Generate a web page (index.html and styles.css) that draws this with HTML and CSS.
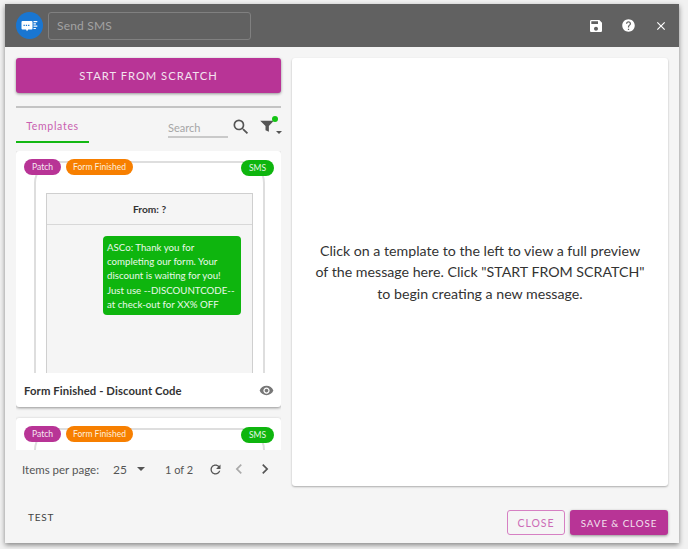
FILE: index.html
```html
<!DOCTYPE html>
<html lang="en">
<head>
<meta charset="utf-8">
<title>Send SMS</title>
<link rel="stylesheet" href="styles.css">
</head>
<body>
<div class="dialog">
  <header class="topbar">
    <span class="logo">
      <svg viewBox="0 0 27 27" width="27" height="27">
        <path class="logo-w" d="M6.500 9h9a1 1 0 0 1 1 1v6.500a1 1 0 0 1-1 1h-3.300l-1.200 1.800-1-1.800H6.500a1 1 0 0 1-1-1V10a1 1 0 0 1 1-1z"/>
        <path class="logo-b" d="M7.500 12.800h1.300v1.100H7.500zM9.800 12.800h1.300v1.100H9.800zM12.100 12.800h1.300v1.100h-1.300z"/>
        <path class="logo-w" d="M17.500 9h3.800v1.200h-3.800zM17.500 11.300h2.400v1.200h-2.400zM17.500 13.600h3.800v1.200h-3.800zM17.500 15.900h2.400v1.200h-2.400z"/>
      </svg>
    </span>
    <div class="title-field">Send SMS</div>
    <div class="top-actions">
      <svg class="icon-save" viewBox="0 0 24 24"><path d="M17 3H5c-1.110 0-2 .9-2 2v14c0 1.100.89 2 2 2h14c1.100 0 2-.9 2-2V7l-4-4zm-5 16c-1.660 0-3-1.340-3-3s1.340-3 3-3 3 1.340 3 3-1.340 3-3 3zm3-10H5V5h10v4z"/></svg>
      <svg class="icon-help" viewBox="0 0 24 24"><path d="M12 2C6.480 2 2 6.480 2 12s4.480 10 10 10 10-4.480 10-10S17.520 2 12 2zm1 17h-2v-2h2v2zm2.070-7.750l-.9.920C13.450 12.900 13 13.500 13 15h-2v-.5c0-1.100.45-2.100 1.170-2.830l1.240-1.260c.37-.36.59-.86.59-1.410 0-1.100-.9-2-2-2s-2 .9-2 2H8c0-2.210 1.790-4 4-4s4 1.790 4 4c0 .88-.36 1.680-.93 2.250z"/></svg>
      <svg class="icon-close" viewBox="0 0 24 24"><path d="M19 6.410 17.590 5 12 10.590 6.410 5 5 6.410 10.590 12 5 17.590 6.410 19 12 13.410 17.590 19 19 17.590 13.410 12z"/></svg>
    </div>
  </header>

  <div class="content">
    <section class="left">
      <button class="btn-primary btn-start" type="button">START FROM SCRATCH</button>
      <div class="divider"></div>
      <div class="tabs-row">
        <div class="tab">Templates</div>
        <div class="search-field">Search</div>
        <svg class="search-icon" viewBox="0 0 24 24"><path d="M15.500 14h-.79l-.28-.27A6.470 6.470 0 0 0 16 9.500 6.500 6.500 0 1 0 9.500 16c1.610 0 3.090-.59 4.230-1.570l.27.28v.79l5 4.990L20.490 19l-4.990-5zm-6 0C7.010 14 5 11.990 5 9.500S7.010 5 9.500 5 14 7.010 14 9.500 11.990 14 9.500 14z"/></svg>
        <span class="filter">
          <svg class="filter-icon" viewBox="0 0 18 16"><path d="M0 1h18l-6.500 7v7.500l-4.500-2V8z"/></svg>
          <span class="filter-dot"></span>
          <span class="filter-caret"></span>
        </span>
      </div>
      <div class="list">
        <article class="card">
          <div class="preview">
            <div class="phone">
              <div class="screen">
                <div class="from">From: ?</div>
                <div class="messages">
                  <div class="bubble">ASCo: Thank you for<br>completing our form. Your<br>discount is waiting for you!<br>Just use --DISCOUNTCODE--<br>at check-out for XX% OFF</div>
                </div>
              </div>
            </div>
            <span class="chip chip-patch">Patch</span>
            <span class="chip chip-orange">Form Finished</span>
            <span class="chip chip-sms">SMS</span>
          </div>
          <div class="card-foot">
            <span class="card-title">Form Finished - Discount Code</span>
            <svg class="eye" viewBox="0 0 24 24"><path d="M12 4.500C7 4.500 2.730 7.610 1 12c1.730 4.390 6 7.500 11 7.500s9.270-3.110 11-7.500c-1.730-4.390-6-7.500-11-7.500zM12 17c-2.760 0-5-2.240-5-5s2.240-5 5-5 5 2.240 5 5-2.240 5-5 5zm0-8c-1.660 0-3 1.340-3 3s1.340 3 3 3 3-1.340 3-3-1.340-3-3-3z"/></svg>
          </div>
        </article>
        <article class="card card-next">
          <div class="preview">
            <div class="phone"></div>
            <span class="chip chip-patch">Patch</span>
            <span class="chip chip-orange">Form Finished</span>
            <span class="chip chip-sms">SMS</span>
          </div>
        </article>
      </div>
      <div class="pager">
        <span class="pager-label">Items per page:</span>
        <span class="pager-size">25</span>
        <span class="pager-caret"></span>
        <span class="pager-range">1 of 2</span>
        <svg class="pager-refresh" viewBox="0 0 24 24"><path d="M17.650 6.350C16.200 4.900 14.210 4 12 4c-4.420 0-7.990 3.580-7.990 8s3.570 8 7.990 8c3.730 0 6.840-2.550 7.730-6h-2.080c-.82 2.330-3.040 4-5.650 4-3.310 0-6-2.690-6-6s2.690-6 6-6c1.660 0 3.140.69 4.220 1.780L13 11h7V4l-2.350 2.350z"/></svg>
        <svg class="chev chev-off" viewBox="0 0 24 24"><path d="M15.410 7.410 14 6l-6 6 6 6 1.410-1.410L10.830 12z"/></svg>
        <svg class="chev chev-on" viewBox="0 0 24 24"><path d="M10 6 8.590 7.410 13.170 12l-4.580 4.590L10 18l6-6z"/></svg>
      </div>
    </section>
    <section class="panel">
      <p class="panel-text">Click on a template to the left to view a full preview<br>of the message here. Click "START FROM SCRATCH"<br>to begin creating a new message.</p>
    </section>
  </div>

  <footer class="foot">
    <span class="foot-test">TEST</span>
    <div class="foot-actions">
      <button class="btn-outline" type="button">CLOSE</button>
      <button class="btn-primary btn-save" type="button">SAVE &amp; CLOSE</button>
    </div>
  </footer>
</div>
</body>
</html>
```

FILE: styles.css
```css
* { box-sizing: border-box; }
html, body { margin: 0; height: 100%; }
body {
  width: 688px;
  height: 549px;
  overflow: hidden;
  background: #f1f1f1;
  font-family: "Lato", "Open Sans", sans-serif;
  padding: 4px 9px 6px 5px;
}
.dialog {
  width: 674px;
  height: 539px;
  background: #f5f5f5;
  box-shadow: 0 2px 5px rgba(0,0,0,.45);
  display: flex;
  flex-direction: column;
}
.topbar {
  height: 43px;
  background: #616161;
  display: flex;
  align-items: center;
  padding: 0 11.500px 0 11px;
  flex: none;
}
.logo {
  width: 27px;
  height: 27px;
  border-radius: 50%;
  background: #1976d2;
  flex: none;
  display: block;
}
.logo svg { display: block; }
.logo-w { fill: #fff; }
.logo-b { fill: #1976d2; }
.title-field {
  width: 203px;
  height: 28px;
  margin-left: 5px;
  border: 1px solid #808080;
  border-radius: 3px;
  color: #a3a3a3;
  font-size: 12px;
  line-height: 26px;
  padding-left: 8px;
  letter-spacing: .2px;
}
.top-actions {
  margin-left: auto;
  display: flex;
  align-items: center;
}
.icon-save { width: 16px; height: 16px; fill: #fff; display: block; }
.icon-help { width: 15px; height: 15px; fill: #fff; display: block; margin-left: 17px; }
.icon-close { width: 14px; height: 14px; fill: #fff; display: block; margin-left: 18px; }
.content {
  flex: none;
  height: 439px;
  display: flex;
  padding: 11px 11px 0;
  gap: 11px;
}
.left { width: 265px; flex: none; display: flex; flex-direction: column; }
.btn-primary {
  border: 0;
  border-radius: 3px;
  background: #b83496;
  color: #f3e3ef;
  font-family: inherit;
  box-shadow: 0 1px 3px rgba(0,0,0,.4);
  letter-spacing: 1px;
  padding: 0;
}
.btn-start { height: 35px; width: 100%; font-size: 11.200px; flex: none; }
.divider { height: 2px; background: #c4c4c4; margin-top: 13px; flex: none; }
.tabs-row {
  height: 35px;
  flex: none;
  display: flex;
  align-items: flex-start;
  position: relative;
}
.tab {
  width: 73px;
  height: 35px;
  border-bottom: 2px solid #14b814;
  color: #c95fb0;
  font-size: 10.500px;
  letter-spacing: .7px;
  text-align: center;
  padding-top: 12px;
}
.search-field {
  width: 60px;
  height: 20px;
  margin: 10px 0 0 79px;
  border-bottom: 2px solid #c9c9c9;
  color: #a6a6a6;
  font-size: 11px;
  line-height: 20px;
}
.search-icon { width: 20px; height: 20px; margin: 9px 0 0 3px; fill: #555; flex: none; }
.filter { position: relative; width: 21px; height: 30px; margin-left: 9px; display: block; }
.filter-icon { position: absolute; left: 0; top: 12px; width: 14px; height: 12px; fill: #555; }
.filter-dot { position: absolute; left: 12px; top: 8px; width: 6px; height: 6px; border-radius: 50%; background: #14c414; }
.filter-caret {
  position: absolute; left: 16px; top: 23px;
  border-left: 3px solid transparent; border-right: 3px solid transparent; border-top: 3px solid #555;
}
.list {
  height: 299px;
  margin-top: 8px;
  flex: none;
  overflow: hidden;
}
.card {
  background: #fff;
  border-radius: 3px;
  box-shadow: 0 1px 3px rgba(0,0,0,.4);
  overflow: hidden;
}
.card-next { margin-top: 11px; height: 34px; border-radius: 3px 3px 0 0; }
.preview { position: relative; height: 222px; overflow: hidden; }
.phone {
  position: absolute;
  left: 18px;
  top: 10px;
  width: 231px;
  height: 260px;
  border: 2px solid #dedede;
  border-radius: 22px;
  background: #fff;
}
.screen {
  position: absolute;
  left: 10px;
  top: 30px;
  width: 207px;
  height: 230px;
  border: 1px solid #cfcfcf;
  background: #f5f5f5;
}
.from {
  height: 31px;
  border-bottom: 1px solid #d8d8d8;
  font-size: 10.200px;
  font-weight: 700;
  color: #333;
  text-align: center;
  line-height: 30px;
}
.messages { padding: 11px 11px 0 56px; }
.bubble {
  width: 138px;
  height: 79px;
  background: #0eb50e;
  border-radius: 4px;
  color: #eaf8ea;
  font-size: 9.700px;
  line-height: 14.200px;
  padding: 4px;
  white-space: nowrap;
}
.chip {
  position: absolute;
  height: 16px;
  border-radius: 8px;
  color: #f7e9f3;
  font-size: 8.500px;
  line-height: 16px;
  text-align: center;
}
.chip-patch { left: 8px; top: 8px; width: 37px; background: #b83496; }
.chip-orange { left: 50px; top: 8px; width: 67px; background: #f77f00; color: #fdeedd; }
.chip-sms { left: 225px; top: 9px; width: 33px; background: #0eb50e; color: #e6f7e6; }
.card-foot {
  height: 34px;
  display: flex;
  align-items: center;
  justify-content: space-between;
  padding: 0 7px 0 8px;
}
.card-title { font-size: 11.300px; font-weight: 700; color: #333; letter-spacing: .1px; }
.eye { width: 15px; height: 15px; fill: #777; display: block; }
.pager {
  flex: none;
  height: 38px;
  display: flex;
  align-items: center;
  color: #555;
  font-size: 11.500px;
}
.pager-label { margin-left: 6px; }
.pager-size { margin-left: 14px; font-size: 12px; }
.pager-caret {
  margin-left: 10px;
  border-left: 4px solid transparent; border-right: 4px solid transparent; border-top: 4px solid #555;
}
.pager-range { margin-left: 20px; font-size: 11px; }
.pager-refresh { width: 15px; height: 15px; fill: #555; display: block; flex: none; margin-left: 15px; }
.chev { width: 20px; height: 20px; display: block; flex: none; }
.chev-off { fill: #aaa; margin-left: 6px; }
.chev-on { fill: #555; margin-left: 6px; }
.panel {
  width: 376px;
  height: 428px;
  background: #fff;
  border-radius: 3px;
  box-shadow: 0 1px 2px rgba(0,0,0,.3);
  display: flex;
  align-items: center;
  justify-content: center;
  flex: none;
}
.panel-text {
  margin: 0;
  white-space: nowrap;
  text-align: center;
  color: #333;
  font-size: 14.200px;
  line-height: 21.500px;
}
.foot {
  flex: 1;
  display: flex;
  align-items: center;
  padding: 0 11px 0 23px;
}
.foot-test { font-size: 10px; letter-spacing: .8px; color: #444; margin-top: 4px; }
.foot-actions { margin-left: auto; display: flex; gap: 5px; margin-top: 16px; }
.btn-outline {
  width: 58px;
  height: 25px;
  padding: 0;
  background: transparent;
  border: 1px solid #d680c3;
  border-radius: 3px;
  color: #cc6bb6;
  font-family: inherit;
  font-size: 10.500px;
  letter-spacing: 1px;
}
.btn-save { width: 98px; height: 25px; font-size: 9.800px; letter-spacing: .9px; }
```
